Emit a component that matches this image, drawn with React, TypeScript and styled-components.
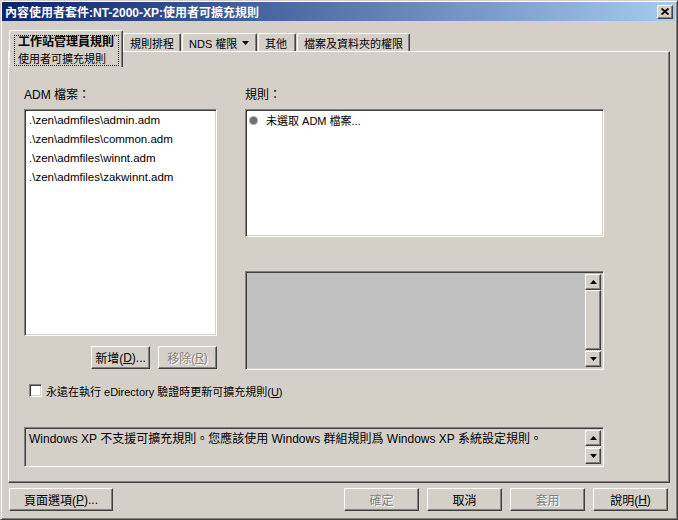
import React from 'react';
import styled, {createGlobalStyle, css} from 'styled-components';

const GlobalStyle = createGlobalStyle`
  html, body {
    margin: 0;
    padding: 0;
    background: #d4d0c8;
  }

  body {
    font-family: "Liberation Sans", "Noto Sans CJK TC", sans-serif;
    font-size: 12px;
    color: #000;
  }
`

const raised = css`
  border: 1px solid;
  border-color: #fff #404040 #404040 #fff;
  box-shadow: inset -1px -1px #808080, inset 1px 1px #d4d0c8;
`

const sunken = css`
  border: 1px solid;
  border-color: #808080 #fff #fff #808080;
  box-shadow: inset 1px 1px #404040, inset -1px -1px #d4d0c8;
`

const checkered = css`
  background: repeating-conic-gradient(#fff 0 25%, #d4d0c8 0 50%) 0 0 / 2px 2px;
`

const Window = styled.div`
  box-sizing: border-box;
  width: 678px;
  height: 520px;
  display: flex;
  flex-direction: column;
  background: #d4d0c8;
  border: 1px solid;
  border-color: #d4d0c8 #404040 #404040 #d4d0c8;
  box-shadow: inset 1px 1px #fff, inset -1px -1px #808080;
  padding: 1px 2px 1px 1px;
`

const TitleBar = styled.div`
  height: 19px;
  display: flex;
  align-items: center;
  justify-content: space-between;
  padding: 0 2px 0 3px;
  background: linear-gradient(to right, #0a246a, #a6caf0);
`

const TitleText = styled.span`
  color: #fff;
  font-weight: bold;
  font-size: 12px;
  white-space: nowrap;
`

const CloseButton = styled.div`
  box-sizing: border-box;
  width: 16px;
  height: 14px;
  display: flex;
  align-items: center;
  justify-content: center;
  background: #d4d0c8;
  ${raised};
`

const Body = styled.div`
  flex: 1;
  display: flex;
  flex-direction: column;
  padding: 9px 5px 0 6px;
`

const TabStrip = styled.div`
  height: 21px;
  display: flex;
  align-items: flex-end;
  padding-left: 1px;
  position: relative;
  z-index: 1;
`

const Tab = styled.div<{ $w: number }>`
  box-sizing: border-box;
  width: ${p => p.$w}px;
  height: 18px;
  display: flex;
  align-items: center;
  gap: 5px;
  padding: 1px 0 0 6px;
  margin-right: 1px;
  font-size: 11px;
  border: 1px solid;
  border-bottom: none;
  border-color: #fff #404040 transparent #fff;
  border-radius: 2px 2px 0 0;
  box-shadow: inset -1px 0 #808080;
  white-space: nowrap;
`

const SelectedTab = styled.div`
  box-sizing: border-box;
  width: 114px;
  height: 37px;
  margin-bottom: -16px;
  padding: 4px 3px 1px 4px;
  background: #d4d0c8;
  border: 1px solid;
  border-bottom: none;
  border-color: #fff #404040 transparent #fff;
  border-radius: 2px 2px 0 0;
  box-shadow: inset -1px 0 #808080;
`

const FocusBox = styled.div`
  height: 100%;
  box-sizing: border-box;
  border: 1px dotted #000;
  padding-left: 3px;
  display: flex;
  flex-direction: column;
`

const TabLine = styled.span<{ $bold?: boolean }>`
  line-height: 12px;
  font-size: ${p => (p.$bold ? '12px' : '11px')};
  font-weight: ${p => (p.$bold ? 'bold' : 'normal')};
  white-space: nowrap;
  & + & {
    margin-top: 5px;
  }
`

const Panel = styled.div`
  box-sizing: border-box;
  height: 432px;
  border: 1px solid;
  border-color: #fff #404040 #404040 #fff;
  box-shadow: inset -1px -1px #808080;
  padding: 36px 0 0 15px;
  display: flex;
  flex-direction: column;
`

const Columns = styled.div`
  display: flex;
  gap: 28px;
`

const Column = styled.div<{ $w: number }>`
  width: ${p => p.$w}px;
  display: flex;
  flex-direction: column;
`

const Label = styled.div`
  line-height: 14px;
  height: 14px;
  margin-bottom: 7px;
  white-space: nowrap;
`

const ListBox = styled.div<{ $h: number }>`
  box-sizing: border-box;
  height: ${p => p.$h}px;
  background: #fff;
  padding: 1px 2px;
  ${sunken};
`

const ListItem = styled.div`
  height: 19px;
  line-height: 19px;
  padding-left: 2px;
  font-size: 11.5px;
  white-space: nowrap;
`

const RuleItem = styled.div`
  display: flex;
  align-items: center;
  gap: 9px;
  height: 16px;
  padding: 1px 0 0 2px;
  font-size: 11px;
  white-space: nowrap;
`

const Bullet = styled.span`
  width: 7px;
  height: 7px;
  border-radius: 50%;
  background: #6f6f6f;
  box-shadow: 0 0 0 1px #a8a8a8;
`

const ButtonRow = styled.div`
  display: flex;
  justify-content: flex-end;
  gap: 8px;
  margin-top: 10px;
`

const Button = styled.div<{ $w: number; $disabled?: boolean }>`
  box-sizing: border-box;
  width: ${p => p.$w}px;
  height: 23px;
  display: flex;
  align-items: center;
  justify-content: center;
  background: #d4d0c8;
  white-space: nowrap;
  color: ${p => (p.$disabled ? '#808080' : '#000')};
  text-shadow: ${p => (p.$disabled ? '1px 1px #fff' : 'none')};
  ${raised};
`

const Mnemonic = styled.span`
  text-decoration: underline;
`

const DescBox = styled.div`
  box-sizing: border-box;
  height: 99px;
  margin-top: 34px;
  background: #c0c0c0;
  display: flex;
  justify-content: flex-end;
  ${sunken};
`

const ScrollBar = styled.div`
  width: 16px;
  margin: 2px 2px 2px 0;
  display: flex;
  flex-direction: column;
`

const ScrollButton = styled.div`
  box-sizing: border-box;
  height: 16px;
  flex: none;
  display: flex;
  align-items: center;
  justify-content: center;
  background: #d4d0c8;
  ${raised};
`

const Thumb = styled.div<{ $h: number }>`
  box-sizing: border-box;
  height: ${p => p.$h}px;
  flex: none;
  background: #d4d0c8;
  ${raised};
`

const Track = styled.div`
  flex: 1;
  ${checkered};
`

const CheckRow = styled.div`
  display: flex;
  align-items: center;
  gap: 4px;
  margin-top: 14px;
  padding-left: 5px;
  height: 13px;
  white-space: nowrap;
`

const CheckBox = styled.span`
  box-sizing: border-box;
  width: 13px;
  height: 13px;
  background: #fff;
  ${sunken};
`

const CheckLabel = styled.span`
  font-size: 11px;
`

const InfoBox = styled.div`
  box-sizing: border-box;
  width: 580px;
  height: 40px;
  margin-top: 30px;
  display: flex;
  ${sunken};
`

const InfoText = styled.div`
  flex: 1;
  padding: 4px 0 0 4px;
  line-height: 14px;
  white-space: nowrap;
`

const Footer = styled.div`
  display: flex;
  justify-content: space-between;
  margin-top: 5px;
  padding: 0 2px 0 1px;
`

const FooterGroup = styled.div`
  display: flex;
  gap: 8px;
`

const Arrow = ({up}: { up?: boolean }) => (
    <svg width="7" height="4" viewBox="0 0 7 4">
        <polygon points={up ? '3.5,0 7,4 0,4' : '0,0 7,0 3.5,4'} fill="#000"/>
    </svg>
);

const CloseIcon = () => (
    <svg width="8" height="7" viewBox="0 0 8 7">
        <path d="M0.5 0.5 L7.5 6.5 M7.5 0.5 L0.5 6.5" stroke="#000" strokeWidth="1.8"/>
    </svg>
);

const files = [
    '.\\zen\\admfiles\\admin.adm',
    '.\\zen\\admfiles\\common.adm',
    '.\\zen\\admfiles\\winnt.adm',
    '.\\zen\\admfiles\\zakwinnt.adm',
];

const App = () => {
    return (
        <>
            <GlobalStyle/>
            <Window>
                <TitleBar>
                    <TitleText>內容使用者套件:NT-2000-XP:使用者可擴充規則</TitleText>
                    <CloseButton><CloseIcon/></CloseButton>
                </TitleBar>

                <Body>
                    <TabStrip>
                        <SelectedTab>
                            <FocusBox>
                                <TabLine $bold>工作站管理員規則</TabLine>
                                <TabLine>使用者可擴充規則</TabLine>
                            </FocusBox>
                        </SelectedTab>
                        <Tab $w={58}>規則排程</Tab>
                        <Tab $w={75}>NDS 權限 <Arrow/></Tab>
                        <Tab $w={38}>其他</Tab>
                        <Tab $w={113}>檔案及資料夾的權限</Tab>
                    </TabStrip>

                    <Panel>
                        <Columns>
                            <Column $w={193}>
                                <Label>ADM 檔案：</Label>
                                <ListBox $h={227}>
                                    {files.map(f => <ListItem key={f}>{f}</ListItem>)}
                                </ListBox>
                                <ButtonRow>
                                    <Button $w={59}>新增(<Mnemonic>D</Mnemonic>)...</Button>
                                    <Button $w={59} $disabled>移除(<Mnemonic>R</Mnemonic>)</Button>
                                </ButtonRow>
                            </Column>

                            <Column $w={359}>
                                <Label>規則：</Label>
                                <ListBox $h={128}>
                                    <RuleItem><Bullet/>未選取 ADM 檔案...</RuleItem>
                                </ListBox>
                                <DescBox>
                                    <ScrollBar>
                                        <ScrollButton><Arrow up/></ScrollButton>
                                        <Thumb $h={60}/>
                                        <Track/>
                                        <ScrollButton><Arrow/></ScrollButton>
                                    </ScrollBar>
                                </DescBox>
                            </Column>
                        </Columns>

                        <CheckRow>
                            <CheckBox/>
                            <CheckLabel>永遠在執行 eDirectory 驗證時更新可擴充規則(<Mnemonic>U</Mnemonic>)</CheckLabel>
                        </CheckRow>

                        <InfoBox>
                            <InfoText>
                                Windows XP 不支援可擴充規則。您應該使用 Windows 群組規則爲 Windows XP 系統設定規則。
                            </InfoText>
                            <ScrollBar>
                                <ScrollButton><Arrow up/></ScrollButton>
                                <Track/>
                                <ScrollButton><Arrow/></ScrollButton>
                            </ScrollBar>
                        </InfoBox>
                    </Panel>

                    <Footer>
                        <Button $w={104}>頁面選項(<Mnemonic>P</Mnemonic>)...</Button>
                        <FooterGroup>
                            <Button $w={75} $disabled>確定</Button>
                            <Button $w={75}>取消</Button>
                            <Button $w={75} $disabled>套用</Button>
                            <Button $w={75}>說明(<Mnemonic>H</Mnemonic>)</Button>
                        </FooterGroup>
                    </Footer>
                </Body>
            </Window>
        </>
    );
};

export default App;
